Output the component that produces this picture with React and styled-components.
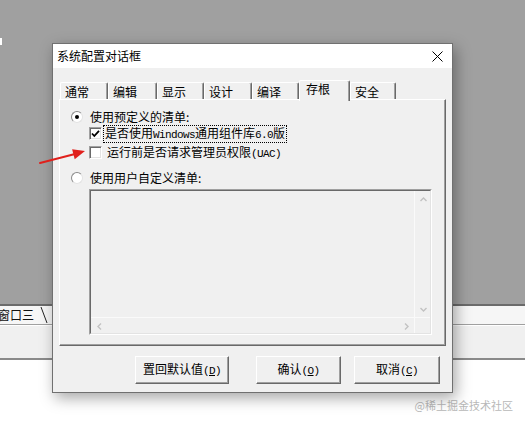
import React from "react";
import styled, { createGlobalStyle } from "styled-components";

const GlobalStyle = createGlobalStyle`
  html, body {
    margin: 0;
    padding: 0;
    background: #fff;
  }
  body {
    font-family: "Noto Sans CJK SC", sans-serif;
  }
`;

const Page = styled.div`
  position: relative;
  width: 525px;
  height: 424px;
  overflow: hidden;
  display: flex;
  flex-direction: column;
  font-family: "Noto Sans CJK SC", sans-serif;
`;

const Desktop = styled.div`
  height: 304px;
  box-sizing: border-box;
  padding-top: 38px;
  background: #a0a0a0;
`;

const Blip = styled.div`
  width: 2px;
  height: 7px;
  background: #fff;
`;

const MdiStrip = styled.div`
  height: 21px;
  box-sizing: border-box;
  border-top: 2px solid #6b6b6b;
  border-bottom: 1px solid #a0a0a0;
  background: #f6f6f6;
  display: flex;
  align-items: center;
`;

const MdiTab = styled.div`
  display: flex;
  align-items: center;
  gap: 6px;
  margin-left: -2px;
  font-size: 12px;
  line-height: 14px;
  color: #111;
`;

const StatusArea = styled.div`
  height: 35px;
  box-sizing: border-box;
  background: #f0f0f0;
  border-top: 1px solid #fff;
  border-bottom: 2px solid #8a8a8a;
`;

const Footer = styled.div`
  flex: 1;
  display: flex;
  justify-content: flex-end;
  align-items: flex-start;
  padding: 38px 12px 0 0;
`;

const Watermark = styled.span`
  font-size: 11px;
  line-height: 14px;
  color: #b8b8b8;
`;

const Dialog = styled.div`
  position: absolute;
  left: 52px;
  top: 43px;
  width: 401px;
  height: 350px;
  box-sizing: border-box;
  border: 1px solid #707070;
  background: #f0f0f0;
  box-shadow: 3px 5px 14px rgba(0, 0, 0, 0.35);
  display: flex;
  flex-direction: column;
  font-size: 12px;
  color: #000;
`;

const TitleBar = styled.div`
  height: 24px;
  flex-shrink: 0;
  background: #fff;
  display: flex;
  align-items: center;
  justify-content: space-between;
  padding: 0 9px 0 4px;
  line-height: 14px;
`;

const Body = styled.div`
  display: flex;
  flex-direction: column;
  padding: 12px 6px 0;
`;

const TabRow = styled.div`
  position: relative;
  z-index: 1;
  display: flex;
  align-items: flex-end;
  height: 19px;
  padding-left: 1px;
`;

const Tab = styled.div`
  box-sizing: border-box;
  width: ${(p) => p.$w}px;
  height: ${(p) => (p.$active ? 21 : 17)}px;
  margin-bottom: ${(p) => (p.$active ? -2 : 0)}px;
  padding: ${(p) => (p.$active ? "1px 0 0 6px" : "2px 0 0 4px")};
  background: #f0f0f0;
  border-top: 1px solid #fff;
  border-left: 1px solid #fff;
  border-right: 1px solid #696969;
  box-shadow: inset -1px 0 #a0a0a0;
  border-radius: 2px 2px 0 0;
  line-height: 14px;
  white-space: nowrap;
`;

const Panel = styled.div`
  height: 247px;
  box-sizing: border-box;
  border-top: 1px solid #fff;
  border-left: 1px solid #fff;
  border-right: 1px solid #696969;
  border-bottom: 1px solid #696969;
  box-shadow: inset -1px -1px #a0a0a0;
  padding: 10px 0 0 11px;
  display: flex;
  flex-direction: column;
`;

const OptionRow = styled.div`
  display: flex;
  align-items: center;
  height: 13px;
  gap: ${(p) => p.$gap}px;
  margin-top: ${(p) => p.$mt || 0}px;
  margin-left: ${(p) => p.$indent || 0}px;
`;

const Radio = styled.span`
  width: 12px;
  height: 12px;
  box-sizing: border-box;
  border-radius: 50%;
  background: #fff;
  border: 1px solid;
  border-color: #8a8a8a #e3e3e3 #e3e3e3 #8a8a8a;
  display: flex;
  align-items: center;
  justify-content: center;

  &::after {
    content: "";
    width: 4px;
    height: 4px;
    border-radius: 50%;
    background: ${(p) => (p.$on ? "#000" : "transparent")};
  }
`;

const Check = styled.span`
  width: 13px;
  height: 13px;
  box-sizing: border-box;
  background: #fff;
  border: 1px solid;
  border-color: #a0a0a0 #fff #fff #a0a0a0;
  box-shadow: inset 1px 1px #696969, inset -1px -1px #e3e3e3;
  display: flex;
  align-items: center;
  justify-content: center;
`;

const Label = styled.span`
  line-height: 13px;
  white-space: nowrap;
  border: 1px ${(p) => (p.$focus ? "dotted #000" : "solid transparent")};
  padding: 0 1px;
`;

const Latin = styled.span`
  font-family: "Liberation Mono", monospace;
  font-size: 11px;
  letter-spacing: -0.6px;
`;

const Key = styled.span`
  text-decoration: underline;
`;

const ListBox = styled.div`
  margin: 5px 0 0 18px;
  width: 343px;
  height: 146px;
  box-sizing: border-box;
  border: 1px solid;
  border-color: #a0a0a0 #fff #fff #a0a0a0;
  display: flex;
`;

const ListInner = styled.div`
  flex: 1;
  border: 1px solid;
  border-color: #696969 #e3e3e3 #e3e3e3 #696969;
  display: flex;
  flex-direction: column;
  background: #f0f0f0;
`;

const ListMain = styled.div`
  flex: 1;
  display: flex;
`;

const ListArea = styled.div`
  flex: 1;
`;

const VScroll = styled.div`
  width: 16px;
  box-sizing: border-box;
  border-left: 1px solid #fafafa;
  display: flex;
  flex-direction: column;
  justify-content: space-between;
`;

const HScroll = styled.div`
  height: 16px;
  box-sizing: border-box;
  border-top: 1px solid #fafafa;
  display: flex;
`;

const ArrowBox = styled.div`
  width: 16px;
  height: 16px;
  flex-shrink: 0;
  margin-left: ${(p) => (p.$end ? "auto" : "0")};
  display: flex;
  align-items: center;
  justify-content: center;
`;

const Corner = styled.div`
  width: 16px;
  border-left: 1px solid #fafafa;
  box-sizing: border-box;
`;

const ButtonRow = styled.div`
  display: flex;
  justify-content: flex-end;
  gap: 13px;
  margin-top: 10px;
  padding-right: 6px;
`;

const Button = styled.button`
  width: ${(p) => p.$w}px;
  height: 28px;
  margin-right: ${(p) => p.$mr || 0}px;
  box-sizing: border-box;
  padding: 0;
  background: #f0f0f0;
  border: 1px solid;
  border-color: #fff #696969 #696969 #fff;
  box-shadow: inset -1px -1px #a0a0a0;
  font: 12px "Noto Sans CJK SC", sans-serif;
  color: #000;
  line-height: 14px;
`;

const Pointer = styled.svg`
  position: absolute;
  left: 36px;
  top: 146px;
  overflow: visible;
`;

const Chevron = ({ dir }) => {
  const rot = { up: 0, right: 90, down: 180, left: 270 }[dir];
  return (
    <svg width="9" height="9" viewBox="0 0 9 9">
      <polyline
        points="1.5,6 4.5,3 7.5,6"
        fill="none"
        stroke="#c2c2c2"
        strokeWidth="1.4"
        transform={`rotate(${rot} 4.5 4.5)`}
      />
    </svg>
  );
};

const tabs = [
  { label: "通常", w: 48 },
  { label: "编辑", w: 49 },
  { label: "显示", w: 47 },
  { label: "设计", w: 48 },
  { label: "编译", w: 47 },
  { label: "存根", w: 51, active: true },
  { label: "安全", w: 46 },
];

export default function App() {
  return (
    <Page>
      <GlobalStyle />
      <Desktop>
        <Blip />
      </Desktop>
      <MdiStrip>
        <MdiTab>
          窗口三
          <svg width="8" height="18" viewBox="0 0 8 18">
            <line x1="1" y1="1" x2="7" y2="17" stroke="#222" strokeWidth="1" />
          </svg>
        </MdiTab>
      </MdiStrip>
      <StatusArea />
      <Footer>
        <Watermark>@稀土掘金技术社区</Watermark>
      </Footer>

      <Dialog>
        <TitleBar>
          <span>系统配置对话框</span>
          <svg width="11" height="11" viewBox="0 0 11 11">
            <path d="M0.5 0.5 L10.5 10.5 M10.5 0.5 L0.5 10.5" stroke="#000" strokeWidth="1" />
          </svg>
        </TitleBar>
        <Body>
          <TabRow>
            {tabs.map((t) => (
              <Tab key={t.label} $w={t.w} $active={t.active}>
                {t.label}
              </Tab>
            ))}
          </TabRow>
          <Panel>
            <OptionRow $gap={5}>
              <Radio $on />
              <Label>使用预定义的清单:</Label>
            </OptionRow>
            <OptionRow $gap={1} $mt={4} $indent={18}>
              <Check>
                <svg width="9" height="9" viewBox="0 0 9 9">
                  <polyline points="1,4.5 3.3,7 8,1.8" fill="none" stroke="#000" strokeWidth="1.8" />
                </svg>
              </Check>
              <Label $focus>
                是否使用<Latin>Windows</Latin>通用组件库<Latin>6.0</Latin>版
              </Label>
            </OptionRow>
            <OptionRow $gap={3} $mt={6} $indent={18}>
              <Check />
              <Label>
                运行前是否请求管理员权限<Latin>(UAC)</Latin>
              </Label>
            </OptionRow>
            <OptionRow $gap={5} $mt={12}>
              <Radio />
              <Label>使用用户自定义清单:</Label>
            </OptionRow>
            <ListBox>
              <ListInner>
                <ListMain>
                  <ListArea />
                  <VScroll>
                    <ArrowBox>
                      <Chevron dir="up" />
                    </ArrowBox>
                    <ArrowBox>
                      <Chevron dir="down" />
                    </ArrowBox>
                  </VScroll>
                </ListMain>
                <HScroll>
                  <ArrowBox>
                    <Chevron dir="left" />
                  </ArrowBox>
                  <ArrowBox $end>
                    <Chevron dir="right" />
                  </ArrowBox>
                  <Corner />
                </HScroll>
              </ListInner>
            </ListBox>
          </Panel>
          <ButtonRow>
            <Button $w={94} $mr={14}>
              置回默认值<Latin>(<Key>D</Key>)</Latin>
            </Button>
            <Button $w={85}>
              确认<Latin>(<Key>O</Key>)</Latin>
            </Button>
            <Button $w={86}>
              取消<Latin>(<Key>C</Key>)</Latin>
            </Button>
          </ButtonRow>
        </Body>
      </Dialog>

      <Pointer width="54" height="22" viewBox="0 0 54 22">
        <line x1="4" y1="17" x2="39" y2="8" stroke="#e0201c" strokeWidth="2" strokeLinecap="round" />
        <polygon points="49,5 38.7,13.2 36.1,3.2" fill="#e0201c" />
      </Pointer>
    </Page>
  );
}
